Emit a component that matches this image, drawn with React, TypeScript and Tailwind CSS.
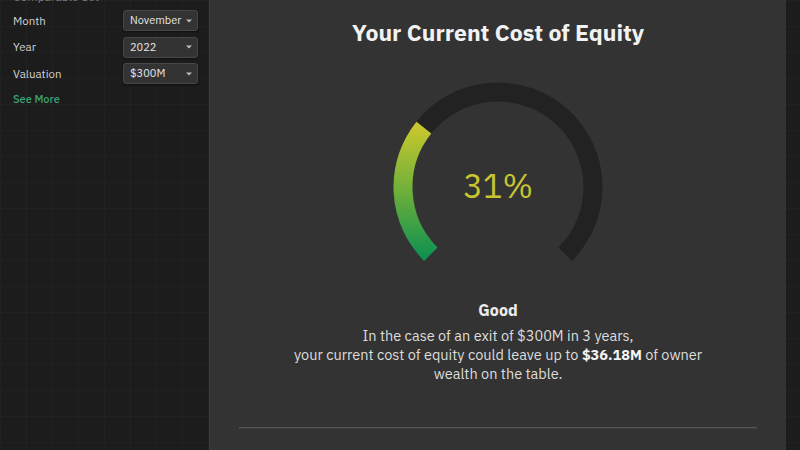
import React from "react";

const font = { fontFamily: '"IBM Plex Sans", Inter, "Noto Sans", sans-serif' };

function Select({ value }: { value: string }) {
  return (
    <div className="flex h-[21px] w-[75px] items-center justify-between rounded-[3px] border border-[#474747] bg-[#333333] pl-[6px] pr-[5px] text-[11px] text-[#e6e6e6] shadow-[0_1px_2px_rgba(0,0,0,0.5)]">
      <span>{value}</span>
      <svg width="6" height="4" viewBox="0 0 6 4">
        <path d="M0 0.5 L6 0.5 L3 3.5 Z" fill="#bdbdbd" />
      </svg>
    </div>
  );
}

function Gauge() {
  // 270° dial, 31% filled from the lower-left end
  const cx = 105;
  const cy = 105;
  const r = 95;
  const start = 135;
  const sweep = 270;
  const pct = 0.31;
  const pt = (deg: number) => {
    const a = (deg * Math.PI) / 180;
    return [cx + r * Math.cos(a), cy + r * Math.sin(a)];
  };
  const [sx, sy] = pt(start);
  const [mx, my] = pt(start + sweep * pct);
  const [ex, ey] = pt(start + sweep);
  return (
    <div className="relative h-[180px] w-[210px]">
      <svg width="210" height="180" viewBox="0 0 210 180">
        <defs>
          <linearGradient id="fillGrad" gradientUnits="userSpaceOnUse" x1="0" y1="175" x2="0" y2="42">
            <stop offset="0" stopColor="#0f9150" />
            <stop offset="0.5" stopColor="#6fb03a" />
            <stop offset="1" stopColor="#cbc82c" />
          </linearGradient>
        </defs>
        <path
          d={`M ${mx} ${my} A ${r} ${r} 0 1 1 ${ex} ${ey}`}
          fill="none"
          stroke="#222222"
          strokeWidth="19"
        />
        <path
          d={`M ${sx} ${sy} A ${r} ${r} 0 0 1 ${mx} ${my}`}
          fill="none"
          stroke="url(#fillGrad)"
          strokeWidth="19"
        />
      </svg>
      <div className="absolute left-0 top-[80px] flex h-[48px] w-[210px] items-center justify-center text-[33px] font-normal text-[#c8c531]">
        31%
      </div>
    </div>
  );
}

export default function App() {
  return (
    <div
      className="flex h-[450px] w-[800px] overflow-hidden bg-[#1c1c1c] bg-[linear-gradient(to_right,#212121_1px,transparent_1px),linear-gradient(to_bottom,#212121_1px,transparent_1px)] bg-[size:26px_26px]"
      style={font}
    >
      {/* Filters sidebar */}
      <aside className="flex w-[209px] shrink-0 flex-col pl-[13px]">
        <div className="-mt-[10px] h-[12px] text-[12px] leading-[14px] text-[#7a7a7a]">Comparable Set</div>
        <div className="mt-[8px] flex flex-col gap-[5.5px] pr-[11px]">
          {[
            ["Month", "November"],
            ["Year", "2022"],
            ["Valuation", "$300M"],
          ].map(([label, value]) => (
            <div key={label} className="flex items-center justify-between">
              <span className="text-[11.5px] text-[#d2d2d2]">{label}</span>
              <Select value={value} />
            </div>
          ))}
        </div>
        <div className="mt-[7px] text-[11px] font-medium text-[#3aa573]">See More</div>
      </aside>

      {/* Result panel */}
      <main className="flex w-[577px] shrink-0 flex-col items-center border-l border-[#3b3b3b] bg-[#333333] px-[29px] pt-[18px]">
        <h1 className="text-[23px] font-bold leading-[28px] text-[#f2f2f2]">Your Current Cost of Equity</h1>
        <div className="mt-[36px]">
          <Gauge />
        </div>
        <div className="mt-[38px] text-[16px] font-bold leading-[20px] text-[#ececec]">Good</div>
        <p className="mt-[6px] text-center text-[14.5px] leading-[19px] text-[#dddddd]">
          In the case of an exit of $300M in 3 years,
          <br />
          your current cost of equity could leave up to <span className="font-bold text-[#f4f4f4]">$36.18M</span> of owner
          <br />
          wealth on the table.
        </p>
        <div className="mt-[44px] h-[2px] w-full border-t border-[#555555] bg-[#3d3d3d]" />
      </main>
    </div>
  );
}
